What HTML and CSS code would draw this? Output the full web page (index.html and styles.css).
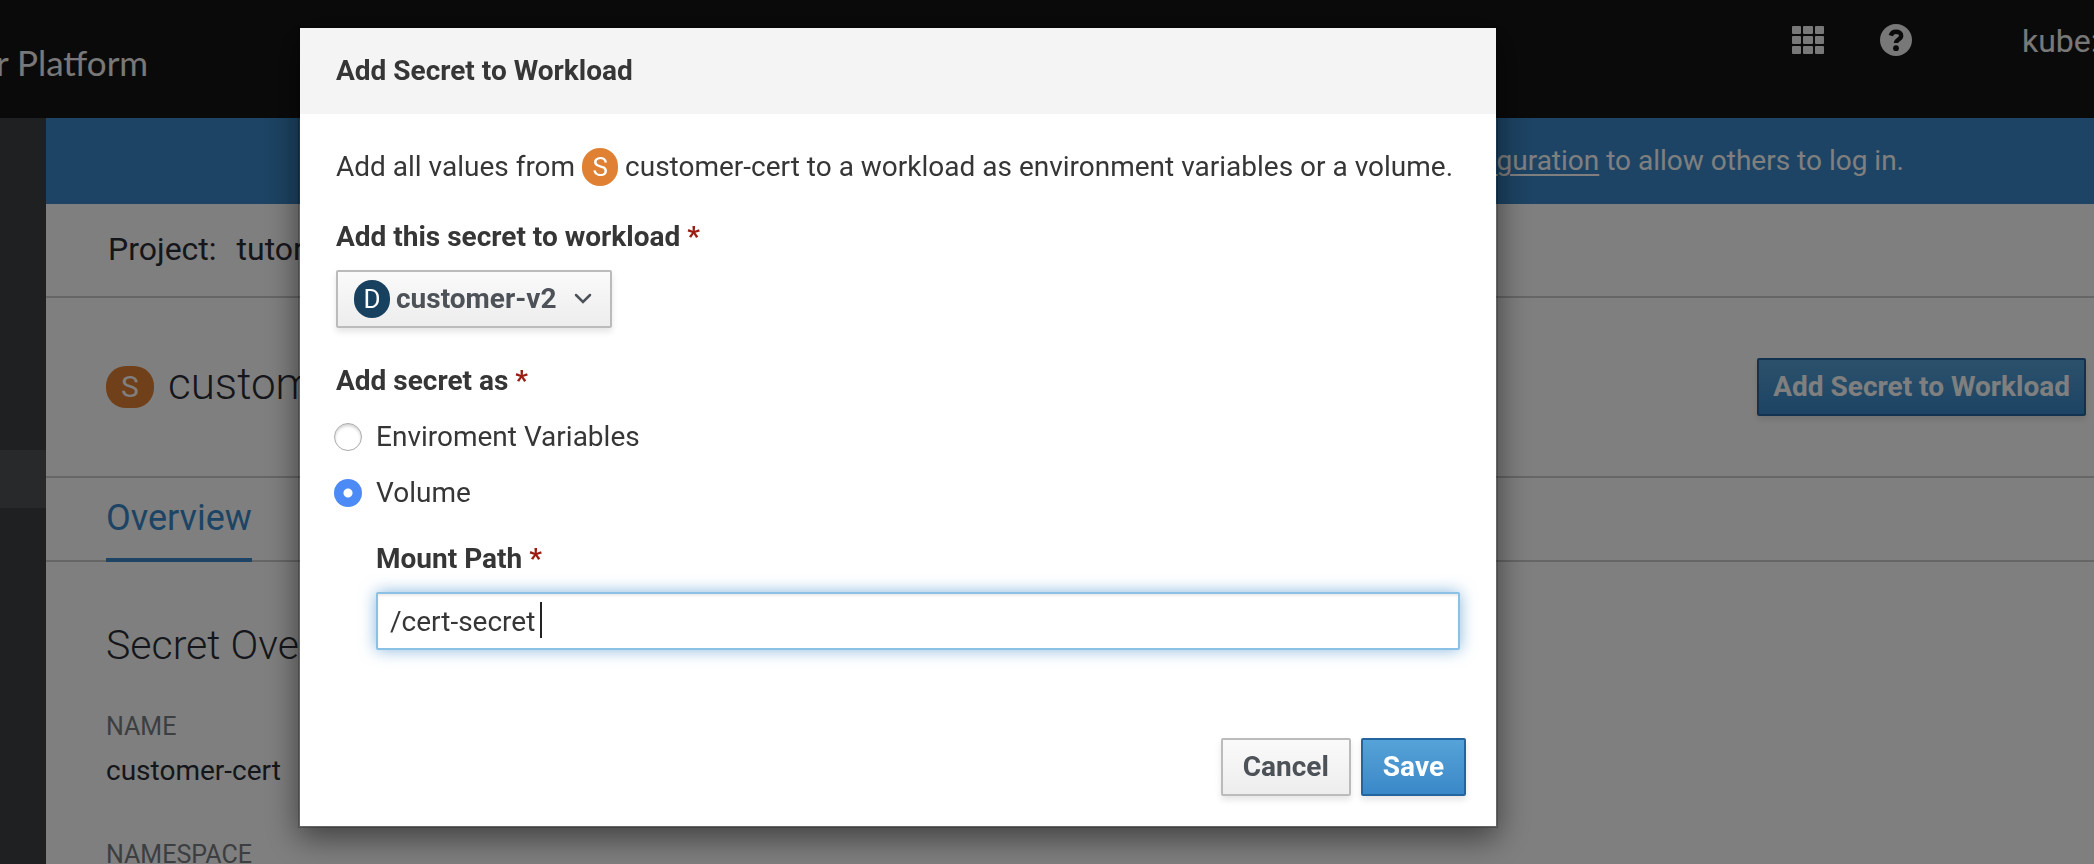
FILE: index.html
```html
<!DOCTYPE html>
<html lang="en">
<head>
<meta charset="utf-8">
<title>customer-cert · Details</title>
<link rel="stylesheet" href="styles.css">
</head>
<body>
<div class="page">
  <header class="masthead">
    <span class="brand">r Platform</span>
    <div class="tools">
      <button class="icon-button" type="button" aria-label="Applications">
        <svg width="32" height="28" viewBox="0 0 32 28" fill="currentColor" aria-hidden="true">
          <rect x="0" y="0" width="9" height="8" rx="1"/><rect x="11" y="0" width="10" height="8" rx="1"/><rect x="23" y="0" width="9" height="8" rx="1"/>
          <rect x="0" y="10" width="9" height="8" rx="1"/><rect x="11" y="10" width="10" height="8" rx="1"/><rect x="23" y="10" width="9" height="8" rx="1"/>
          <rect x="0" y="20" width="9" height="8" rx="1"/><rect x="11" y="20" width="10" height="8" rx="1"/><rect x="23" y="20" width="9" height="8" rx="1"/>
        </svg>
      </button>
      <button class="icon-button" type="button" aria-label="Help">
        <svg width="32" height="32" viewBox="0 0 32 32" aria-hidden="true">
          <circle cx="16" cy="16" r="16" fill="currentColor"/>
          <path d="M10.8 11.6C11.6 9 13.4 7.8 16 7.8c3 0 5.2 1.500 5.200 4 0 3.700-5.200 3.600-5.200 7.200" fill="none" stroke="#151515" stroke-width="4.400"/>
          <circle cx="16" cy="24.200" r="2.900" fill="#151515"/>
        </svg>
      </button>
      <button class="user" type="button">kube:admin</button>
    </div>
  </header>
  <div class="shell">
    <nav class="sidebar" aria-label="Main"><div class="sidebar-current"></div></nav>
    <main class="content">
      <div class="banner"><p><a href="#oauth">configuration</a> to allow others to log in.</p></div>
      <div class="project-bar"><span>Project:</span><span>tutorial</span></div>
      <div class="title-bar">
        <h1><span class="badge badge-secret badge-large">S</span><span class="title-text">customer-cert</span></h1>
        <button class="btn btn-primary btn-tight" type="button">Add Secret to Workload</button>
      </div>
      <nav class="tabs" aria-label="Secret"><a class="tab" href="#overview">Overview</a></nav>
      <section class="details">
        <h2>Secret Overview</h2>
        <dl>
          <dt>NAME</dt><dd>customer-cert</dd>
          <dt>NAMESPACE</dt><dd>tutorial</dd>
        </dl>
      </section>
    </main>
  </div>
</div>

<div class="backdrop">
  <form class="modal" role="dialog" aria-labelledby="modal-title">
    <header class="modal-header"><h2 id="modal-title">Add Secret to Workload</h2></header>
    <div class="modal-body">
      <p class="intro">Add all values from <span class="badge badge-secret">S</span> customer-cert to a workload as environment variables or a volume.</p>
      <div class="field">
        <label class="field-label" for="workload">Add this secret to workload <span class="required">*</span></label>
        <div class="select">
          <span class="badge badge-deployment">D</span>
          <select id="workload"><option>customer-v2</option></select>
          <svg class="chevron" width="18" height="12" viewBox="0 0 18 12" aria-hidden="true"><path d="M2 2l7 7 7-7" fill="none" stroke="#4d5258" stroke-width="2.500" stroke-linecap="round"/></svg>
        </div>
      </div>
      <fieldset>
        <legend class="field-label">Add secret as <span class="required">*</span></legend>
        <label class="choice"><input type="radio" name="as">Enviroment Variables</label>
        <label class="choice"><input type="radio" name="as" checked>Volume</label>
      </fieldset>
      <div class="field mount">
        <label class="field-label" for="mount">Mount Path <span class="required">*</span></label>
        <div class="text-field"><input id="mount" type="text" value="/cert-secret"><span class="caret"></span></div>
      </div>
    </div>
    <footer class="modal-footer">
      <button class="btn" type="button">Cancel</button>
      <button class="btn btn-primary" type="submit">Save</button>
    </footer>
  </form>
</div>
</body>
</html>
```
FILE: styles.css
```css
* { box-sizing: border-box; }
html, body { height: 100%; margin: 0; overflow: hidden; }
body { font: 28px/38px Roboto, "Liberation Sans", sans-serif; color: #363636; }
h1, h2, p, dl, dd, fieldset, legend { margin: 0; padding: 0; border: 0; }
button, input, select { font: inherit; color: inherit; }

.page { height: 100%; display: flex; flex-direction: column; overflow: hidden; background: #fff; color: #2b2d36; }
.masthead { flex: none; height: 118px; display: flex; justify-content: space-between; background: #151515; color: #f0f0f0; overflow: hidden; }
.brand { margin-left: -4px; padding-top: 42px; font: 400 35px/40px Lato, sans-serif; white-space: nowrap; }
.tools { flex: none; width: 302px; height: 80px; display: flex; align-items: center; gap: 56px; white-space: nowrap; }
.icon-button { border: 0; padding: 0; background: none; display: flex; }
.user { border: 0; padding: 2px 0 0 54px; background: none; font-size: 32px; }

.shell { flex: 1; display: flex; min-height: 0; }
.sidebar { flex: none; width: 46px; padding-top: 332px; background: #3d4044; }
.sidebar-current { height: 58px; background: #505255; }
.content { flex: 1; min-width: 0; overflow: hidden; }
.banner { height: 86px; display: flex; align-items: center; justify-content: flex-end; padding-right: 190px; background: #3a88c8; color: #fff; white-space: nowrap; }
.banner a { color: inherit; text-underline-offset: 4px; text-decoration-thickness: 2px; }
.project-bar { height: 94px; display: flex; align-items: center; gap: 20px; padding: 0 62px 2px; border-bottom: 2px solid #ccc; font-size: 32px; }
.title-bar { height: 180px; display: flex; align-items: center; justify-content: space-between; padding: 0 8px 0 60px; border-bottom: 2px solid #ccc; }
.title-bar h1 { display: flex; align-items: center; gap: 14px; font-weight: 300; font-size: 44px; line-height: 60px; }
.title-text { padding-bottom: 6px; }
.tabs { height: 84px; display: flex; padding: 0 60px; border-bottom: 2px solid #ccc; }
.tab { height: 84px; padding-top: 20px; border-bottom: 4px solid #3a88c8; color: #3a88c8; font-size: 36px; line-height: 40px; text-decoration: none; }
.details { padding: 56px 60px; }
.details h2 { font-weight: 300; font-size: 41px; line-height: 54px; }
dt { margin-top: 36px; color: #797c80; font-size: 25px; }
dd { margin: 6px 0 46px; }
dt + dd + dt { margin-top: 0; }

.badge { display: inline-block; width: 36px; height: 38px; border-radius: 18px; color: #fff; font-size: 26px; font-weight: 400; line-height: 38px; text-align: center; }
.badge-secret { background: #df8032; }
.badge-deployment { background: #18405f; }
.badge-large { width: 48px; height: 42px; border-radius: 20px; font-size: 30px; line-height: 42px; }

.btn { height: 58px; padding: 0 20px; border: 2px solid #bbb; border-radius: 2px; background: linear-gradient(#fafafa, #ededed); box-shadow: 0 4px 6px rgba(3, 3, 3, .1); color: #4d5258; font-weight: 700; white-space: nowrap; }
.btn-primary { border-color: #24649f; background: linear-gradient(#56a3d8, #3a88c8); color: #fff; }
.btn-tight { padding: 0 14px; }

.backdrop { position: fixed; inset: 0; padding: 26px 0 0 298px; background: rgba(0, 0, 0, .5); overflow: hidden; }
.modal { width: 1200px; border: 2px solid rgba(0, 0, 0, .2); background: #fff; background-clip: padding-box; box-shadow: 0 10px 30px rgba(0, 0, 0, .5); }
.modal-header { padding: 24px 36px; background: #f4f4f4; }
.modal-header h2 { font-size: 28px; font-weight: 700; line-height: 38px; }
.modal-body { padding: 34px 36px 0; }
.intro { margin-bottom: 32px; white-space: nowrap; }
.field-label { display: block; font-weight: 700; }
.required { color: #9b1c10; }
.select { width: 276px; height: 58px; margin-top: 14px; display: grid; align-items: center; }
.select > * { grid-area: 1 / 1; }
.select select { width: 100%; height: 58px; padding: 0 0 0 58px; border: 2px solid #bbb; border-radius: 2px; background: linear-gradient(#fafafa, #ededed); box-shadow: 0 4px 6px rgba(3, 3, 3, .1); color: #4d5258; font-weight: 700; appearance: none; }
.select .badge { z-index: 1; margin-left: 18px; }
.chevron { justify-self: end; margin-right: 20px; pointer-events: none; }
fieldset { margin-top: 34px; }
.choice { display: flex; align-items: center; gap: 14px; margin: 18px 0 0 -2px; }
.choice input { appearance: none; flex: none; width: 28px; height: 28px; margin: 0; border: 1px solid #aaa; border-radius: 50%; background: #fff; box-shadow: inset 0 2px 3px rgba(0, 0, 0, .18); }
.choice input:checked { border: 0; background: radial-gradient(circle, #fff 4px, #4c8bf5 5px); box-shadow: none; }
.mount { margin: 28px 0 0 40px; }
.text-field { position: relative; margin-top: 14px; }
.text-field input { display: block; width: 100%; height: 58px; padding: 0 12px; border: 2px solid #8bc1e5; border-radius: 2px; outline: 0; box-shadow: inset 0 2px 2px rgba(3, 3, 3, .08), 0 0 16px rgba(57, 135, 200, .6); }
.caret { position: absolute; left: 164px; top: 10px; width: 2px; height: 36px; background: #222; }
.modal-footer { display: flex; justify-content: flex-end; gap: 10px; padding: 88px 30px 30px; }
```
